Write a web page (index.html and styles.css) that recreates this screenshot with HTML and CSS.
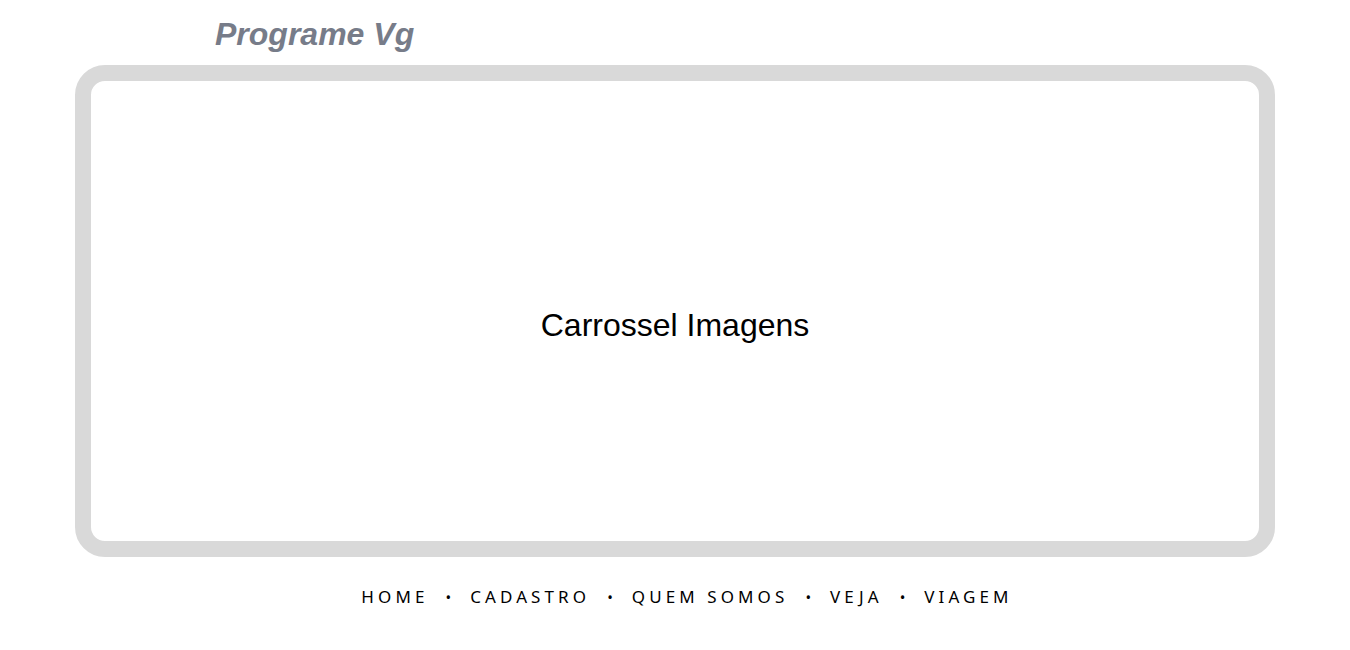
FILE: index.html
```html
<!DOCTYPE html>
<html lang="pt">
<head>
<meta charset="utf-8">
<title>Programe Vg</title>
<link rel="stylesheet" href="styles.css">
</head>
<body>
<header class="header">
  <h1 class="logo">Programe Vg</h1>
</header>
<main class="carousel">
  <p class="carousel-text">Carrossel Imagens</p>
</main>
<nav class="nav">
  <a class="nav-link" href="#">HOME</a>
  <span class="dot">•</span>
  <a class="nav-link" href="#">CADASTRO</a>
  <span class="dot">•</span>
  <a class="nav-link" href="#">QUEM SOMOS</a>
  <span class="dot">•</span>
  <a class="nav-link" href="#">VEJA</a>
  <span class="dot">•</span>
  <a class="nav-link" href="#">VIAGEM</a>
</nav>
</body>
</html>
```
FILE: styles.css
```css
html, body {
  margin: 0;
  padding: 0;
  background: #ffffff;
}
.header {
  padding: 16px 0 0 215px;
  height: 65px;
  box-sizing: border-box;
}
.logo {
  margin: 0;
  font-family: "Liberation Sans", Arial, sans-serif;
  font-weight: bold;
  font-style: italic;
  font-size: 32px;
  line-height: 37px;
  color: #777c89;
}
.carousel {
  margin: 0 auto;
  width: 1200px;
  height: 492px;
  box-sizing: border-box;
  border: 16px solid #d9d9d9;
  border-radius: 30px;
  padding-top: 28px;
  display: flex;
  align-items: center;
  justify-content: center;
}
.carousel-text {
  margin: 0;
  font-family: "Liberation Sans", Arial, sans-serif;
  font-size: 32px;
  color: #000;
}
.nav {
  display: flex;
  justify-content: center;
  align-items: center;
  margin-top: 28px;
  padding-left: 24px;
  font-family: "Noto Sans", "Open Sans", sans-serif;
  font-size: 17px;
  letter-spacing: 4.1px;
  color: #000;
}
.nav-link {
  color: #000;
  text-decoration: none;
}
.dot {
  font-size: 15px;
  letter-spacing: 0;
  margin: 0 19px 0 17px;
}
```
